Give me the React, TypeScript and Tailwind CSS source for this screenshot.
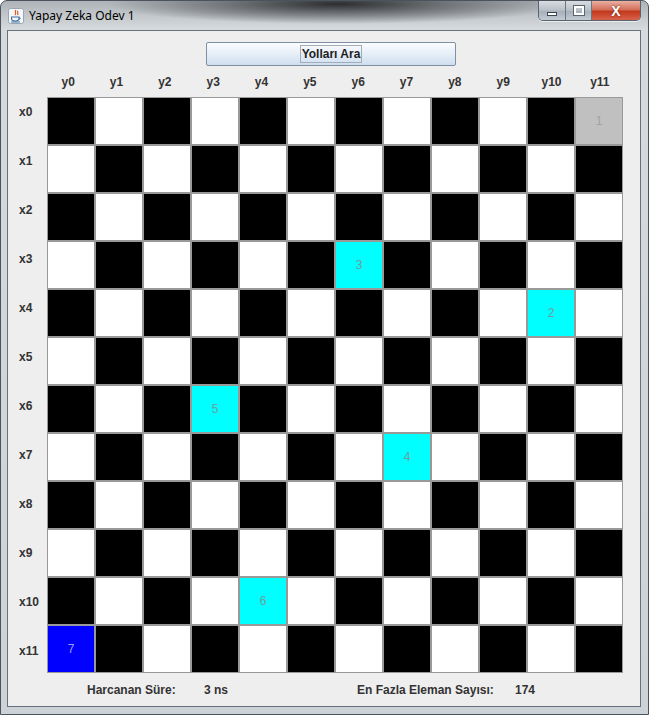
import React from "react";

const font = { fontFamily: '"Liberation Sans", Arial, sans-serif' };

const marks: Record<string, { bg: string; text: string; label: string }> = {
  "0,11": { bg: "bg-[#c0c0c0]", text: "text-[#a2a2a2]", label: "1" },
  "4,10": { bg: "bg-[#00ffff]", text: "text-[#6e9c9c]", label: "2" },
  "3,6": { bg: "bg-[#00ffff]", text: "text-[#6e9c9c]", label: "3" },
  "7,7": { bg: "bg-[#00ffff]", text: "text-[#6e9c9c]", label: "4" },
  "6,3": { bg: "bg-[#00ffff]", text: "text-[#6e9c9c]", label: "5" },
  "10,4": { bg: "bg-[#00ffff]", text: "text-[#6e9c9c]", label: "6" },
  "11,0": { bg: "bg-[#0000ff]", text: "text-[#9c9cf0]", label: "7" },
};

const idx = Array.from({ length: 12 }, (_, i) => i);

function JavaIcon() {
  return (
    <svg width="16" height="16" viewBox="0 0 16 16">
      <rect x="0.5" y="0.5" width="15" height="15" rx="2" fill="#f4f6f8" stroke="#9aa6b2" />
      <path d="M8 2c-2 2 1 3-1 5M10 3c-1.5 1.5 1 2.2-0.5 4" stroke="#e0581e" strokeWidth="1.2" fill="none" />
      <path d="M3.5 9h7.5v1.5c0 1.6-1.6 2.5-3.7 2.5s-3.8-0.9-3.8-2.5z" fill="none" stroke="#3a6ea5" strokeWidth="1.1" />
      <path d="M11 9.8c1.6-0.3 1.8 1.4 0 1.6" stroke="#3a6ea5" strokeWidth="1" fill="none" />
      <path d="M3 14h9" stroke="#3a6ea5" strokeWidth="1" />
    </svg>
  );
}

function CaptionButtons() {
  return (
    <div className="flex h-[20px] rounded-b-[5px] border border-t-0 border-[#5a6470] overflow-hidden shadow-[0_1px_0_rgba(255,255,255,0.6)]">
      <div className="w-[27px] flex items-center justify-center bg-[linear-gradient(to_bottom,#d8dde2,#b6bec6_50%,#a5aeb8_51%,#c2cad2)] border-r border-[#6b7580]">
        <div className="w-[10px] h-[4px] mt-[6px] bg-white border border-[#3c4650]" />
      </div>
      <div className="w-[26px] flex items-center justify-center bg-[linear-gradient(to_bottom,#d8dde2,#b6bec6_50%,#a5aeb8_51%,#c2cad2)] border-r border-[#6b7580]">
        <div className="w-[10px] h-[9px] border-2 border-white outline outline-1 outline-[#5a6470]" />
      </div>
      <div className="w-[48px] flex items-center justify-center bg-[linear-gradient(to_bottom,#eab0a2,#d5705a_45%,#c2391f_55%,#d9624a)]">
        <span className="text-white font-bold text-[14px] leading-none [text-shadow:0_0_2px_#5a1a10]" style={font}>
          X
        </span>
      </div>
    </div>
  );
}

export default function App() {
  return (
    <div
      className="w-[649px] h-[715px] overflow-hidden rounded-t-[7px] border border-[#4b535c] flex flex-col bg-[radial-gradient(ellipse_230px_20px_at_52%_3px,#2b2d2f,#74787c_50%,transparent_100%),linear-gradient(to_bottom,#aeb3b8,#d6dadd_28px,#cdd2d6)]"
      style={font}
    >
      {/* title bar */}
      <div className="h-[29px] flex items-start justify-between pl-[7px] pr-[7px]">
        <div className="flex items-center gap-[5px] pt-[6px]">
          <JavaIcon />
          <span className="text-[12px] text-black" style={{ fontFamily: '"Noto Sans", "Liberation Sans", sans-serif' }}>
            Yapay Zeka Odev 1
          </span>
        </div>
        <CaptionButtons />
      </div>

      {/* content */}
      <div className="ml-[6px] mr-[7px] h-[677px] border border-[#66717d] bg-[#eeeeee] flex flex-col">
        <div className="pt-[11px] pl-[198px]">
          <div className="w-[250px] h-[24px] border border-[#7f90a4] rounded-[2px] bg-[linear-gradient(to_bottom,#fbfcfe,#e6eef7_50%,#cfdff0)] flex items-center justify-center">
            <span className="px-[1px] border border-[#a3adb8] text-[12px] leading-[16px] text-[#1e1e1e] font-bold">
              Yolları Ara
            </span>
          </div>
        </div>

        <div className="flex">
          {/* row labels */}
          <div className="w-[39px] mt-[22px] h-[587px] grid grid-rows-12">
            {idx.map((r) => (
              <div key={r} className="flex items-center pl-[11px] text-[12px] font-bold text-[#333333]">
                x{r}
              </div>
            ))}
          </div>

          <div className="flex flex-col">
            {/* column labels */}
            <div className="h-[31px] w-[580px] -ml-[3px] grid grid-cols-12">
              {idx.map((c) => (
                <div key={c} className="flex items-center justify-center text-[12px] font-bold text-[#333333]">
                  y{c}
                </div>
              ))}
            </div>

            {/* board */}
            <div className="grid grid-cols-[repeat(12,48px)] grid-rows-[repeat(12,48px)]">
              {idx.map((r) =>
                idx.map((c) => {
                  const m = marks[`${r},${c}`];
                  const bg = m ? m.bg : (r + c) % 2 === 0 ? "bg-black" : "bg-white";
                  return (
                    <div
                      key={`${r}-${c}`}
                      className={`border border-[#999999] flex items-center justify-center text-[12px] ${bg} ${m ? m.text : ""}`}
                    >
                      {m ? m.label : ""}
                    </div>
                  );
                })
              )}
            </div>
          </div>
        </div>

        <div className="h-[30px] flex items-center text-[12px] font-bold text-[#333333]">
          <div className="w-[79px]" />
          <div className="w-[117px]">Harcanan Süre:</div>
          <div className="w-[153px]">3 ns</div>
          <div className="w-[158px]">En Fazla Eleman Sayısı:</div>
          <div>174</div>
        </div>
      </div>
    </div>
  );
}
